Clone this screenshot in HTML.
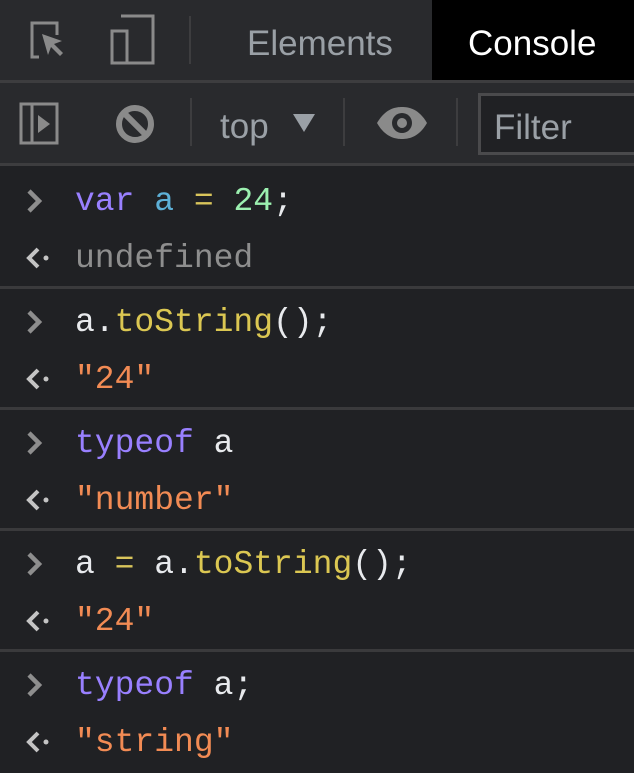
<!DOCTYPE html>
<html><head><style>
*{margin:0;padding:0;box-sizing:border-box}
body{width:634px;height:768px;background:#202124;overflow:hidden;position:relative;font-family:"Liberation Sans",sans-serif}
.top{position:absolute;left:0;top:0;width:634px;height:80px;background:#292a2d}
.b1{position:absolute;left:0;top:80px;width:634px;height:3px;background:#3d3d3f}
.tb{position:absolute;left:0;top:83px;width:634px;height:80px;background:#292a2d}
.b2{position:absolute;left:0;top:163px;width:634px;height:3px;background:#3d3d3f}
.sep{position:absolute;width:2px;background:#3d3d3f}
.t{position:absolute;font-size:35px;color:#bdc1c6}
.row{position:absolute;left:0;width:634px;height:60px;font-family:"Liberation Mono","DejaVu Sans Mono",monospace;font-size:33px;line-height:60px;color:#e8eaed;white-space:pre}
.row span.c{position:absolute;left:75px}
.hl{position:absolute;left:0;width:634px;height:3px;background:#3a3a3c}
.k{color:#9980ff}.v{color:#5db0d7}.o{color:#d9c55b}.n{color:#9cf0b0}.s{color:#f28b54}.u{color:#8e8e8e}.f{color:#dbc752}
.ar{position:absolute;left:26px}
</style></head><body>
<div class="top"></div>
<div style="position:absolute;left:432px;top:0;width:202px;height:80px;background:#000"></div>
<svg style="position:absolute;left:25px;top:18px" width="60" height="48" viewBox="0 0 60 48">
<path d="M14 39H7V5h25v12" fill="none" stroke="#8a8a8a" stroke-width="3"/>
<path d="M17 16l20 7-8 3 9 9-3 3-9-9-3 8z" fill="#8a8a8a"/>
</svg>
<svg style="position:absolute;left:88px;top:14px" width="80" height="52" viewBox="0 0 80 52">
<path d="M33 2h32v47H33" fill="none" stroke="#8a8a8a" stroke-width="3"/>
<rect x="24" y="17" width="15" height="32" fill="none" stroke="#8a8a8a" stroke-width="3"/>
</svg>
<div class="sep" style="left:189px;top:16px;height:48px"></div>
<div class="t" style="left:247px;top:24px;color:#9aa0a6">Elements</div>
<div class="t" style="left:468px;top:24px;color:#fff">Console</div>
<div class="b1"></div>
<div class="tb"></div>
<svg style="position:absolute;left:18px;top:100px" width="140" height="50" viewBox="0 0 140 50">
<rect x="3" y="4" width="36" height="39" fill="none" stroke="#8a8a8a" stroke-width="3"/>
<line x1="14" y1="4" x2="14" y2="43" stroke="#8a8a8a" stroke-width="3"/>
<path d="M20 15l12 9-12 9z" fill="#8a8a8a"/>
<circle cx="117" cy="24" r="16" fill="none" stroke="#8a8a8a" stroke-width="6"/>
<line x1="106" y1="13" x2="128" y2="35" stroke="#8a8a8a" stroke-width="6"/>
</svg>
<div class="sep" style="left:190px;top:98px;height:48px"></div>
<div class="t" style="left:220px;top:107px;color:#9aa0a6">top</div>
<svg style="position:absolute;left:293px;top:114px" width="24" height="20"><path d="M0 0h22L11 18z" fill="#9aa0a6"/></svg>
<div class="sep" style="left:343px;top:98px;height:48px"></div>
<svg style="position:absolute;left:375px;top:105px" width="54" height="36" viewBox="0 0 54 36">
<path d="M2 18C10 4 20 2 27 2s17 2 25 16C44 32 34 34 27 34S10 32 2 18z" fill="#8a8a8a"/>
<circle cx="27" cy="18" r="10" fill="#292a2d"/><circle cx="27" cy="18" r="5" fill="#8a8a8a"/>
</svg>
<div class="sep" style="left:456px;top:98px;height:48px"></div>
<div style="position:absolute;left:478px;top:93px;width:170px;height:62px;border:3px solid #4a4a4c;background:#202124"></div>
<div class="t" style="left:494px;top:108px;color:#9aa0a6">Filter</div>
<div class="b2"></div>

<svg width="0" height="0" style="position:absolute"><defs>
<path id="gt" d="M3 2l10 10-10 10" fill="none" stroke="#8e8e8e" stroke-width="4.5"/>
<g id="lt"><path d="M12 2l-9 9 9 9" fill="none" stroke="#c4c4c4" stroke-width="4"/><circle cx="20" cy="11" r="2.5" fill="#c4c4c4"/></g>
</defs></svg>

<div class="row" style="top:172px"><svg class="ar" style="top:17px" width="24" height="26"><use href="#gt"/></svg><span class="c"><span class="k">var</span> <span class="v">a</span> <span class="o">=</span> <span class="n">24</span>;</span></div>
<div class="row" style="top:229px"><svg class="ar" style="top:18px" width="30" height="24"><use href="#lt"/></svg><span class="c u">undefined</span></div>
<div class="hl" style="top:286px"></div>
<div class="row" style="top:293px"><svg class="ar" style="top:17px" width="24" height="26"><use href="#gt"/></svg><span class="c">a.<span class="f">toString</span>();</span></div>
<div class="row" style="top:350px"><svg class="ar" style="top:18px" width="30" height="24"><use href="#lt"/></svg><span class="c s">"24"</span></div>
<div class="hl" style="top:407px"></div>
<div class="row" style="top:414px"><svg class="ar" style="top:17px" width="24" height="26"><use href="#gt"/></svg><span class="c"><span class="k">typeof</span> a</span></div>
<div class="row" style="top:471px"><svg class="ar" style="top:18px" width="30" height="24"><use href="#lt"/></svg><span class="c s">"number"</span></div>
<div class="hl" style="top:528px"></div>
<div class="row" style="top:535px"><svg class="ar" style="top:17px" width="24" height="26"><use href="#gt"/></svg><span class="c">a <span class="o">=</span> a.<span class="f">toString</span>();</span></div>
<div class="row" style="top:592px"><svg class="ar" style="top:18px" width="30" height="24"><use href="#lt"/></svg><span class="c s">"24"</span></div>
<div class="hl" style="top:649px"></div>
<div class="row" style="top:656px"><svg class="ar" style="top:17px" width="24" height="26"><use href="#gt"/></svg><span class="c"><span class="k">typeof</span> a;</span></div>
<div class="row" style="top:713px"><svg class="ar" style="top:18px" width="30" height="24"><use href="#lt"/></svg><span class="c s">"string"</span></div>
</body></html>
